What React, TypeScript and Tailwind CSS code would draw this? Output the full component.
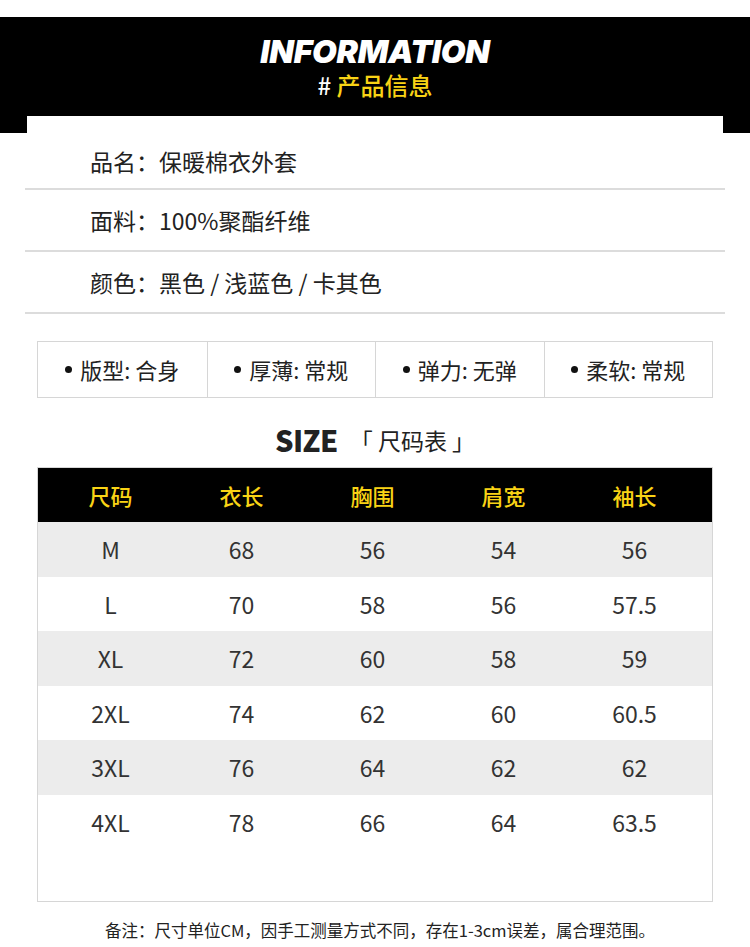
const infoRows = [
  { label: "品名", value: "保暖棉衣外套" },
  { label: "面料", value: "100%聚酯纤维" },
  { label: "颜色", value: "黑色 / 浅蓝色 / 卡其色" },
];

const features = [
  { label: "版型", value: "合身" },
  { label: "厚薄", value: "常规" },
  { label: "弹力", value: "无弹" },
  { label: "柔软", value: "常规" },
];

const headers = ["尺码", "衣长", "胸围", "肩宽", "袖长"];

const sizes = [
  ["M", "68", "56", "54", "56"],
  ["L", "70", "58", "56", "57.5"],
  ["XL", "72", "60", "58", "59"],
  ["2XL", "74", "62", "60", "60.5"],
  ["3XL", "76", "64", "62", "62"],
  ["4XL", "78", "66", "64", "63.5"],
];

const cjk = "font-['Noto_Sans_CJK_SC',sans-serif]";

export default function App() {
  return (
    <div className={`w-[750px] h-[947px] bg-white text-[#222] ${cjk} overflow-hidden`}>
      <div className="h-[17px]" />
      <header className="bg-black h-[116px] flex flex-col items-center pt-[19px]">
        <h1 className="font-['Inter',sans-serif] font-black italic text-white text-[32px] leading-[32px] tracking-[-0.3px]">
          INFORMATION
        </h1>
        <p className="mt-[3px] text-[24px] leading-[28px] font-medium">
          <span className="text-white">#</span>
          <span className="text-[#f9d315]"> 产品信息</span>
        </p>
      </header>
      <div className="mx-[27px] -mt-[17px] bg-white h-[17px]" />

      <section className="mx-[25px]">
        {infoRows.map((row, i) => (
          <div
            key={row.label}
            className={`${i === 0 ? "h-[57px]" : "h-[62px]"} border-b-2 border-[#dcdcdc] flex items-center pl-[65px] text-[23px] pt-[1px]`}
          >
            {row.label}：{row.value}
          </div>
        ))}
      </section>

      <section className="mx-[37px] mt-[27px] grid grid-cols-4 border border-[#d6d6d6] h-[57px]">
        {features.map((f, i) => (
          <div
            key={f.label}
            className={`flex items-center justify-center text-[22px] ${i > 0 ? "border-l border-[#d6d6d6]" : ""}`}
          >
            <span className="mr-[8px] w-[7px] h-[7px] rounded-full bg-[#111]" />
            {f.label}: {f.value}
          </div>
        ))}
      </section>

      <h2 className="mt-[21px] h-[42px] flex items-center justify-center text-[23px]">
        <span className="font-black text-[29px] tracking-[-0.5px]">SIZE</span>
        <span className="ml-[12px]">「 尺码表 」</span>
      </h2>

      <section className="mx-[37px] mt-[6px] h-[435px] border border-[#d6d6d6] flex flex-col">
        <div className="bg-black h-[54px] grid grid-cols-5 pl-[7px] pr-[12px] text-[#f9d315] text-[22px] font-medium">
          {headers.map((h) => (
            <div key={h} className="flex items-center justify-center">
              {h}
            </div>
          ))}
        </div>
        {sizes.map((row, i) => (
          <div
            key={row[0]}
            className={`h-[54.5px] grid grid-cols-5 pl-[7px] pr-[12px] text-[23px] text-[#333] ${i % 2 === 0 ? "bg-[#ececec]" : "bg-white"}`}
          >
            {row.map((cell, j) => (
              <div key={j} className="flex items-center justify-center">
                {cell}
              </div>
            ))}
          </div>
        ))}
      </section>

      <p className="mt-[16px] pl-[10px] text-center text-[16.5px] leading-[24px] text-[#222]">
        备注：尺寸单位CM，因手工测量方式不同，存在1-3cm误差，属合理范围。
      </p>
    </div>
  );
}
